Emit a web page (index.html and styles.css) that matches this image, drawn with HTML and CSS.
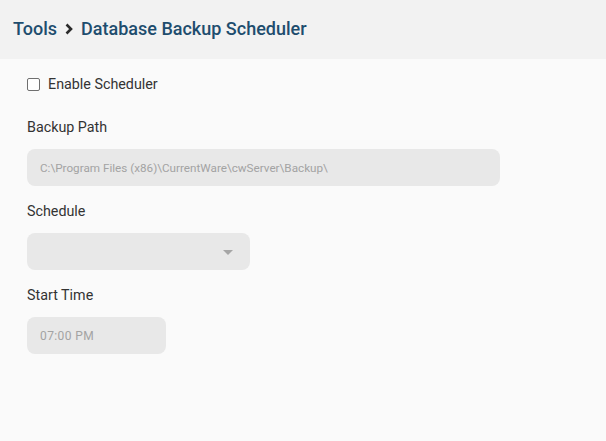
FILE: index.html
```html
<!DOCTYPE html>
<html lang="en">
<head>
  <meta charset="UTF-8" />
  <meta name="viewport" content="width=device-width, initial-scale=1" />
  <title>Database Backup Scheduler</title>
  <link rel="stylesheet" href="styles.css">
</head>
<body>

<div class="page-header">
  <span class="crumb">Tools</span>
  <svg class="crumb-sep" width="10" height="12" viewBox="0 0 10 12">
    <path d="M2.5 1.5 L7 6 L2.5 10.5" fill="none" stroke="#2b2b2b" stroke-width="2.6" />
  </svg>
  <span class="crumb">Database Backup Scheduler</span>
</div>

<div class="content">
  <label class="check-row">
    <span class="checkbox"></span>
    Enable Scheduler
  </label>

  <div class="field-label">Backup Path</div>
  <div class="field field-path">C:\Program Files (x86)\CurrentWare\cwServer\Backup\</div>

  <div class="field-label">Schedule</div>
  <div class="field field-select">
    <span class="caret"></span>
  </div>

  <div class="field-label">Start Time</div>
  <div class="field field-time">07:00 PM</div>
</div>

</body>
</html>
```

FILE: styles.css
```css
body {
  font-family: Roboto, 'Liberation Sans', sans-serif;
  background: #fafafa;
  margin: 0;
  height: 100vh;
}

.page-header {
  background: #f2f2f2;
  height: 59px;
  padding-left: 13px;
  display: flex;
  align-items: center;
  gap: 6px;
}

.crumb {
  font-size: 18px;
  font-weight: 500;
  color: #1e4d6e;
  padding-bottom: 3px;
}

.crumb-sep {
  margin: 0 1px 2px 1px;
}

.content {
  padding: 15px 27px;
}

.check-row {
  display: flex;
  align-items: center;
  gap: 8px;
  height: 20px;
  font-size: 14.3px;
  color: #333;
  margin-bottom: 23px;
}

.checkbox {
  width: 11px;
  height: 11px;
  border: 1px solid #6f6f6f;
  border-radius: 2px;
  background: #fff;
}

.field-label {
  font-size: 14.3px;
  line-height: 20px;
  color: #333;
  margin-bottom: 12px;
}

.field {
  background: #e8e8e8;
  border-radius: 8px;
  height: 37px;
  box-sizing: border-box;
  padding: 0 13px;
  display: flex;
  align-items: center;
  font-size: 11.7px;
  color: #a3a3a3;
  margin-bottom: 15px;
}

.field-path {
  width: 473px;
}

.field-select {
  width: 223px;
  justify-content: flex-end;
  padding-right: 17px;
}

.field-time {
  width: 139px;
  font-size: 12px;
  letter-spacing: 0.4px;
}

.caret {
  width: 0;
  height: 0;
  border-left: 5px solid transparent;
  border-right: 5px solid transparent;
  border-top: 5px solid #a6a6a6;
  margin-top: 2px;
}
```
